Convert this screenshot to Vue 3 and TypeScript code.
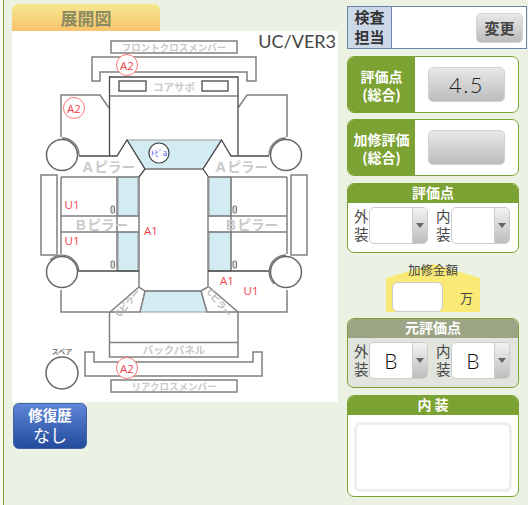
<script setup lang="ts">
interface Pick { label: string; value: string }
const blankPicks: Pick[] = [{ label: '外装', value: '' }, { label: '内装', value: '' }]
const basePicks: Pick[] = [{ label: '外装', value: 'B' }, { label: '内装', value: 'B' }]
const grayPaths: string[] = [
  'M92 81V57H256V81H247V72H100V81Z',
  'M109.5 96H238',
  'M61 137V95H100L109 108',
  'M238 108L247 95H287V137',
  'M61 177V254',
  'M287 177V254',
  'M61 290V312H110L139 287',
  'M287 290V312H238L209 287',
  'M109.5 312V357H238V312',
  'M109.5 342.5H238',
  'M61 216H139M61 232H139',
  'M208 216H287M208 232H287',
  'M117 177V271M231 177V271',
  'M85 352H94V362H253V352H262V376H85Z',
  'M139 177V287L145 291H201L208 287V177',
  'M145 169H203',
  'M110 312H140L145 291M238 312H207L201 291',
  'M139 177H61M208.5 177H287'
]
const darkPaths: string[] = [
  'M109.5 156V77H238V156',
  'M78 156H117L127 140L145 169L139 177',
  'M270 156H231L221.5 140L203 169L208.5 177',
  'M78 271H139',
  'M208 271H270'
]
const wheels = [
  { x: 62, y: 155, arc: 'M62 138A17 17 0 0 1 79 155' },
  { x: 286, y: 155, arc: 'M269 155A17 17 0 0 1 286 138' },
  { x: 62, y: 272, arc: 'M50 260A17 17 0 0 1 79 272' },
  { x: 286, y: 272, arc: 'M286 255A17 17 0 0 0 274 284' }
]
const marks = [
  { x: 72, y: 209, t: 'U1' }, { x: 72, y: 245, t: 'U1' }, { x: 151, y: 235, t: 'A1' },
  { x: 227, y: 285, t: 'A1' }, { x: 251, y: 295, t: 'U1' }
]
const circles = [[127, 65], [74, 108], [127, 368]]
</script>

<template>
  <div class="page">
    <section class="left">
      <h2 class="tab">展開図</h2>
      <div class="sheet">
        <svg class="map" viewBox="12 31 326 371" width="326" height="371">
          <polygon class="glass" points="127,140 222,140 203,169 145,169" />
          <rect class="glass" x="118" y="177" width="20" height="39" />
          <rect class="glass" x="118" y="232" width="20" height="39" />
          <rect class="glass" x="209" y="177" width="22" height="39" />
          <rect class="glass" x="209" y="232" width="22" height="39" />
          <polygon class="glass" points="145,291 201,291 207,312 140,312" />
          <path v-for="d in grayPaths" :key="d" class="line" :d="d" />
          <path v-for="d in darkPaths" :key="d" class="dark" :d="d" />
          <rect class="line" x="111" y="41" width="126" height="12" />
          <rect class="line" x="111" y="380" width="126" height="12" />
          <rect class="dark" x="119" y="81" width="27" height="10" />
          <rect class="dark" x="202" y="81" width="26" height="10" />
          <rect class="line" x="41" y="175" width="16" height="80" />
          <rect class="line" x="291" y="175" width="16" height="80" />
          <rect class="tiny" x="111" y="206" width="3.5" height="7" rx="1" />
          <rect class="tiny" x="111" y="261" width="3.5" height="7" rx="1" />
          <rect class="tiny" x="233" y="206" width="3.5" height="7" rx="1" />
          <rect class="tiny" x="233" y="261" width="3.5" height="7" rx="1" />
          <g v-for="w in wheels" :key="w.arc">
            <circle class="wheel-back" :cx="w.x" :cy="w.y" r="17" />
            <path class="wheel-arc" :d="w.arc" />
            <circle class="wheel" :cx="w.x" :cy="w.y" r="15.5" />
          </g>
          <circle class="wheel" cx="62" cy="373" r="16" />
          <text class="label small" x="174" y="51">フロントクロスメンバー</text>
          <text class="label small" x="174" y="390">リアクロスメンバー</text>
          <text class="label mid" x="174" y="91">コアサポ</text>
          <text class="label mid" x="174" y="354">バックパネル</text>
          <text class="label big" x="108" y="172">Ａピラー</text>
          <text class="label big" x="241" y="172">Ａピラー</text>
          <text class="label big" x="101" y="230">Ｂピラー</text>
          <text class="label big" x="251" y="230">Ｂピラー</text>
          <text class="label tinytext" x="128" y="306" transform="rotate(-50 128 303)">Cピラー</text>
          <text class="label tinytext" x="219" y="306" transform="rotate(50 219 303)">Cピラー</text>
          <text class="spare" x="62" y="354">スペア</text>
          <g v-for="c in circles" :key="c.join()">
            <circle class="a2" :cx="c[0]" :cy="c[1]" r="10.5" />
            <text class="mark" :x="c[0]" :y="c[1] + 4.5">A2</text>
          </g>
          <circle class="bubble" cx="159" cy="153" r="10" />
          <text class="bubble-text" x="159" y="156">ﾄﾋﾞa</text>
          <text v-for="m in marks" :key="m.x + '-' + m.y" class="mark" :x="m.x" :y="m.y">{{ m.t }}</text>
        </svg>
        <span class="version">UC/VER3</span>
      </div>
      <button class="history" type="button">
        <b>修復歴</b>
        <span>なし</span>
      </button>
    </section>

    <aside class="right">
      <div class="inspector">
        <div class="inspector-head">検査<br />担当</div>
        <div class="inspector-body"><button class="gray-btn change" type="button">変更</button></div>
      </div>

      <div class="score">
        <div class="score-head">評価点<br />(総合)</div>
        <div class="score-body"><button class="gray-btn big-btn" type="button">4.5</button></div>
      </div>
      <div class="score second">
        <div class="score-head">加修評価<br />(総合)</div>
        <div class="score-body"><button class="gray-btn big-btn" type="button"></button></div>
      </div>

      <div class="card rating">
        <h3>評価点</h3>
        <div class="picks">
          <div v-for="p in blankPicks" :key="p.label" class="pick">
            <span class="pick-label">{{ p.label }}</span>
            <div class="select"><span class="select-value">{{ p.value }}</span><span class="select-arrow"><i></i></span></div>
          </div>
        </div>
      </div>

      <div class="cost">
        <svg class="roof" viewBox="0 0 94 48" width="94" height="48"><polygon points="47,0 94,14 94,48 0,48 0,14" /></svg>
        <span class="cost-title">加修金額</span>
        <div class="cost-row"><span class="cost-input"></span><span class="cost-unit">万</span></div>
      </div>

      <div class="card rating base">
        <h3>元評価点</h3>
        <div class="picks">
          <div v-for="p in basePicks" :key="p.label" class="pick">
            <span class="pick-label">{{ p.label }}</span>
            <div class="select"><span class="select-value">{{ p.value }}</span><span class="select-arrow"><i></i></span></div>
          </div>
        </div>
      </div>

      <div class="card interior">
        <h3>内 装</h3>
        <div class="interior-body"><div class="textarea"></div></div>
      </div>
    </aside>
  </div>
</template>

<style>
html, body { margin: 0; background: #fafcf8; }
</style>

<style scoped>
.page {
  box-sizing: border-box;
  margin-left: 3px;
  width: 525px;
  height: 505px;
  overflow: hidden;
  border-left: 1px solid #7ba232;
  background: #ebf2e4;
  display: flex;
  font-family: "Noto Sans CJK JP", "Liberation Sans", sans-serif;
  color: #444;
}
.left { margin-left: 8px; width: 326px; padding-top: 4px; flex: none; }
.tab {
  margin: 0;
  width: 148px;
  height: 27px;
  border-radius: 6px 6px 0 0;
  background: linear-gradient(#f4e88f, #f8c26a);
  color: #8c8a62;
  font-size: 17px;
  line-height: 27px;
  text-align: center;
  font-weight: 700;
}
.sheet { position: relative; width: 326px; height: 371px; background: #fff; }
.map { display: block; }
.version {
  position: absolute;
  top: 0;
  right: 2px;
  font: 18px/20px Lato, sans-serif;
  color: #444;
}
.glass { fill: #d3ebf3; stroke: #999; stroke-width: 1; }
.line { fill: none; stroke: #808080; stroke-width: 1.5; }
.dark { fill: none; stroke: #484848; stroke-width: 1.3; }
.tiny { fill: #ddd; stroke: #555; stroke-width: 0.8; }
.wheel-back { fill: #fff; stroke: none; }
.wheel-arc { fill: none; stroke: #777; stroke-width: 1.3; }
.wheel { fill: #fff; stroke: #666; stroke-width: 1.5; }
.label { fill: #c9c9c9; text-anchor: middle; font-weight: 700; }
.small { font-size: 9.5px; }
.mid { font-size: 10.5px; }
.big { font-size: 13.5px; }
.tinytext { font-size: 9px; fill: #bbb; }
.spare { fill: #777; font-size: 7px; font-weight: 700; text-anchor: middle; }
.a2 { fill: #fff; stroke: #f77; stroke-width: 1; }
.mark { fill: #f4404c; font: 11.5px "Open Sans", sans-serif; text-anchor: middle; }
.bubble { fill: #fff; stroke: #444; stroke-width: 1.2; }
.bubble-text { fill: #5a5aee; font-size: 8px; text-anchor: middle; }
.history {
  display: flex;
  flex-direction: column;
  align-items: center;
  box-sizing: border-box;
  width: 74px;
  height: 46px;
  margin: 1px 0 0 1px;
  padding: 1px 0 0;
  border: 1px solid #3d62a8;
  border-radius: 6px;
  background: linear-gradient(#5f86d6, #234b9c);
  color: #fff;
  font-family: inherit;
}
.history b { font-size: 14.5px; line-height: 20px; }
.history span { font-size: 17px; line-height: 20px; }
.right { margin-left: 9px; width: 180px; padding-top: 6px; flex: none; }
.inspector { display: flex; box-sizing: border-box; width: 180px; height: 43px; border: 1px solid #6a85a8; background: #fff; }
.inspector-head {
  box-sizing: border-box;
  width: 44px;
  background: #ccd8e8;
  border-right: 1px solid #6a85a8;
  text-align: center;
  font-size: 15px;
  line-height: 20px;
  font-weight: 700;
  color: #333;
}
.inspector-body { flex: 1; display: flex; justify-content: flex-end; align-items: center; padding-right: 3px; }
.gray-btn {
  padding: 0;
  border: 1px solid #d4d4d4;
  border-radius: 5px;
  background: linear-gradient(#e8e8e8, #bcbcbc);
  font-family: inherit;
  color: #444;
}
.change { width: 47px; height: 30px; font-size: 15px; font-weight: 700; }
.score {
  display: flex;
  box-sizing: border-box;
  width: 172px;
  height: 57px;
  margin-top: 7px;
  border: 1px solid #7ba232;
  border-radius: 7px;
  overflow: hidden;
  background: #fff;
}
.second { margin-top: 6px; }
.score-head {
  width: 67px;
  background: #7ba232;
  color: #fff;
  font-size: 14px;
  font-weight: 700;
  line-height: 18px;
  text-align: center;
  display: flex;
  align-items: center;
  justify-content: center;
  white-space: nowrap;
}
.score-body { flex: 1; display: flex; align-items: center; padding-left: 13px; }
.big-btn { width: 77px; height: 35px; font: 300 22px Lato, sans-serif; letter-spacing: 1.5px; color: #222; }
.card {
  box-sizing: border-box;
  width: 172px;
  border: 1px solid #7ba232;
  border-radius: 7px;
  overflow: hidden;
  background: #fff;
}
.card h3 {
  margin: -1px -1px 0;
  height: 20px;
  background: #7ba232;
  color: #fff;
  font-size: 14px;
  line-height: 19px;
  text-align: center;
  font-weight: 700;
}
.rating { height: 70px; margin-top: 7px; }
.rating.base { margin-top: 6px; background: #e2e4de; }
.rating.base h3 { background: #9ba585; }
.picks { display: flex; padding: 4px 0 0 6px; }
.pick { display: flex; width: 83px; }
.pick-label { width: 15px; font-size: 14.5px; line-height: 18px; flex: none; color: #444; }
.select {
  display: flex;
  box-sizing: border-box;
  width: 59px;
  height: 37px;
  border: 1px solid #ccc;
  border-radius: 5px;
  overflow: hidden;
  background: #fff;
}
.select-value { flex: 1; text-align: center; font: 300 21px/35px Lato, sans-serif; color: #111; }
.select-arrow {
  width: 14px;
  background: linear-gradient(#f2f2f2, #bdbdbd);
  border-left: 1px solid #ccc;
  display: flex;
  align-items: center;
  justify-content: center;
}
.select-arrow i { border: 4px solid transparent; border-top: 5px solid #666; border-bottom: 0; }
.cost { position: relative; width: 94px; height: 48px; margin: 11px 0 0 39px; }
.roof { position: absolute; left: 0; top: 0; }
.roof polygon { fill: #f9ea76; }
.cost-title { position: absolute; left: 0; right: 0; top: -2px; text-align: center; font-size: 12.5px; line-height: 16px; }
.cost-row { position: absolute; left: 6px; top: 18px; display: flex; align-items: center; }
.cost-input {
  box-sizing: border-box;
  width: 51px;
  height: 30px;
  background: #fff;
  border: 1px solid #ccc;
  border-radius: 6px;
}
.cost-unit { margin-left: 17px; font-size: 13px; }
.interior { height: 102px; margin-top: 7px; }
.interior-body { padding: 7px 6px 0; }
.textarea {
  box-sizing: border-box;
  height: 70px;
  border: 3px solid #eeeeee;
  border-radius: 7px;
  background: #fff;
}
</style>
